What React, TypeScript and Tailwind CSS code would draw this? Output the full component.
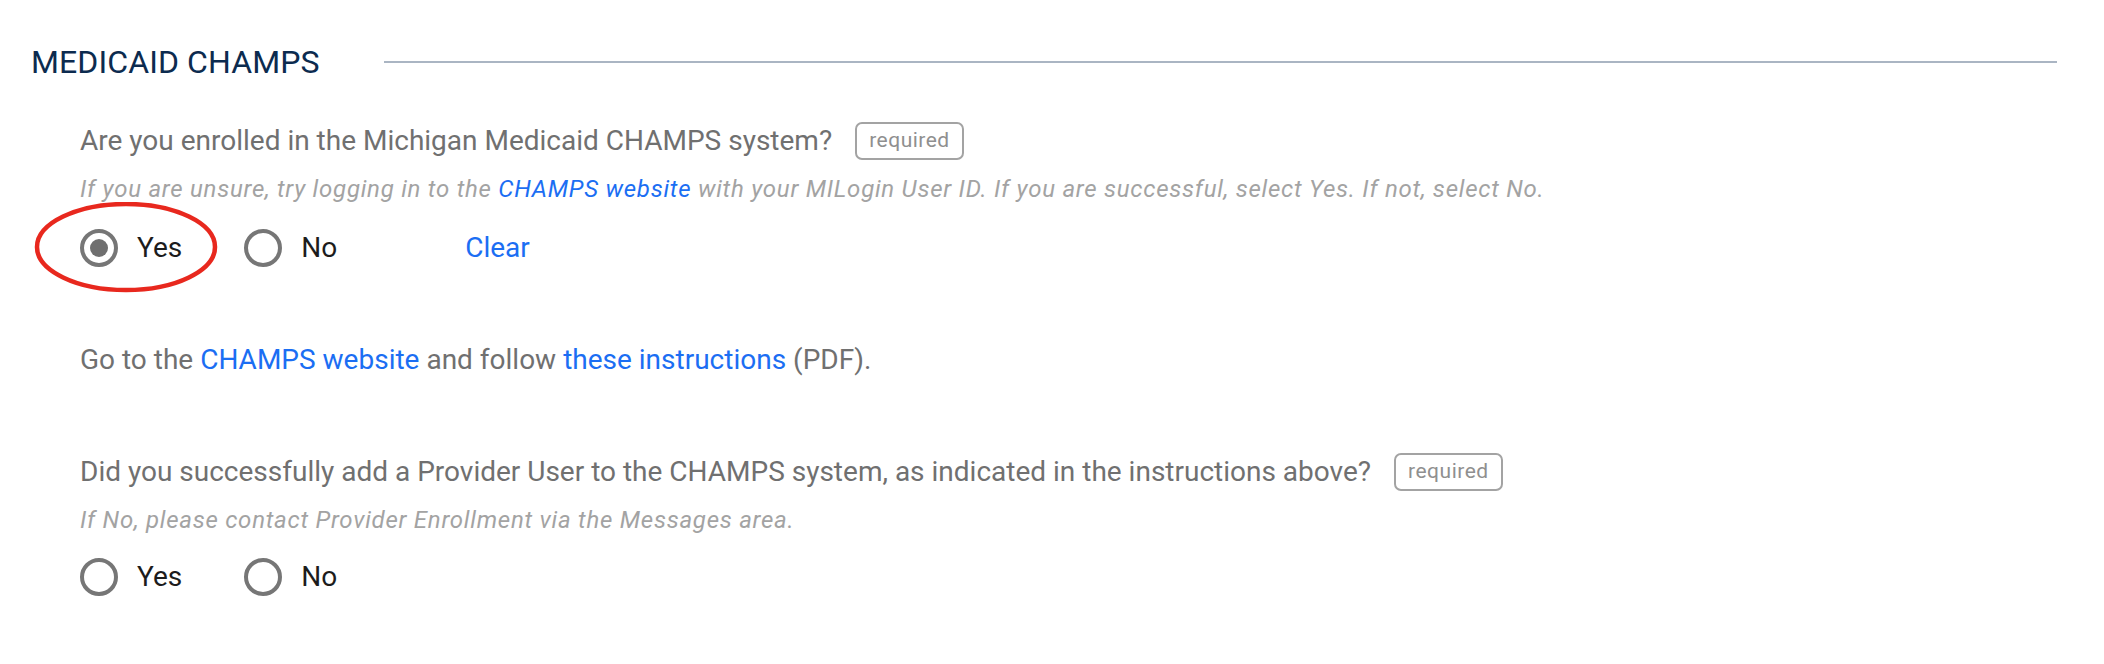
import type { ReactNode } from 'react';

interface RadioProps {
  label: string;
  checked?: boolean;
}

function Radio({ label, checked = false }: RadioProps) {
  return (
    <label className="flex items-center gap-[19px] cursor-pointer">
      <span className="w-[38px] h-[38px] rounded-full border-4 border-[#767676] flex items-center justify-center">
        {checked && <span className="w-[18px] h-[18px] rounded-full bg-[#6f6f6f]" />}
      </span>
      <span className="text-[28px] leading-10 text-[#1c1c1c]">{label}</span>
    </label>
  );
}

function Question({ children }: { children: ReactNode }) {
  return (
    <div className="flex items-center h-10">
      <span className="text-[28px] leading-10 text-[#707070]">{children}</span>
      <span className="ml-[23px] h-[38px] px-[12px] flex items-center rounded-[7px] border-2 border-[#a3a3a3] text-[21px] tracking-[0.5px] text-[#8f8f8f]">
        required
      </span>
    </div>
  );
}

function Help({ children }: { children: ReactNode }) {
  return (
    <p className="text-[24px] leading-8 italic tracking-[0.75px] text-[#a3a3a3]">{children}</p>
  );
}

export default function App() {
  return (
    <div className="w-[2104px] h-[664px] bg-white font-['Roboto',sans-serif] pt-[42px] pl-[31px] pr-[47px]">
      {/* Section heading */}
      <div className="flex items-center h-10">
        <h2 className="text-[32px] leading-10 text-[#0c2b4f] tracking-[0.1px]">MEDICAID CHAMPS</h2>
        <div className="flex-1 ml-[64px] h-[2px] bg-[#aab5c3]" />
      </div>

      <div className="pl-[49px]">
        {/* Enrolled question */}
        <div className="mt-[39px]">
          <Question>Are you enrolled in the Michigan Medicaid CHAMPS system?</Question>
        </div>
        <div className="mt-[12px]">
          <Help>
            If you are unsure, try logging in to the{' '}
            <a className="text-[#1b6ef3]">CHAMPS website</a> with your MILogin User ID. If you
            are successful, select Yes. If not, select No.
          </Help>
        </div>
        <div className="relative mt-[23px] flex items-center h-10">
          <svg
            className="absolute left-[-46px] top-[-26px] pointer-events-none"
            width="184"
            height="92"
            viewBox="0 0 184 92"
          >
            <ellipse cx="92" cy="45" rx="89" ry="43" fill="none" stroke="#e8281e" strokeWidth="4.5" />
          </svg>
          <Radio label="Yes" checked />
          <div className="ml-[62px]">
            <Radio label="No" />
          </div>
          <a className="ml-[128px] text-[28px] leading-10 text-[#1b6ef3]">Clear</a>
        </div>

        {/* Instructions */}
        <p className="mt-[72px] text-[28px] leading-10 text-[#707070]">
          Go to the <a className="text-[#1b6ef3]">CHAMPS website</a> and follow{' '}
          <a className="text-[#1b6ef3]">these instructions</a> (PDF).
        </p>

        {/* Provider user question */}
        <div className="mt-[72px]">
          <Question>
            Did you successfully add a Provider User to the CHAMPS system, as indicated in the
            instructions above?
          </Question>
        </div>
        <div className="mt-[12px]">
          <Help>If No, please contact Provider Enrollment via the Messages area.</Help>
        </div>
        <div className="mt-[21px] flex items-center h-10">
          <Radio label="Yes" />
          <div className="ml-[62px]">
            <Radio label="No" />
          </div>
        </div>
      </div>
    </div>
  );
}
